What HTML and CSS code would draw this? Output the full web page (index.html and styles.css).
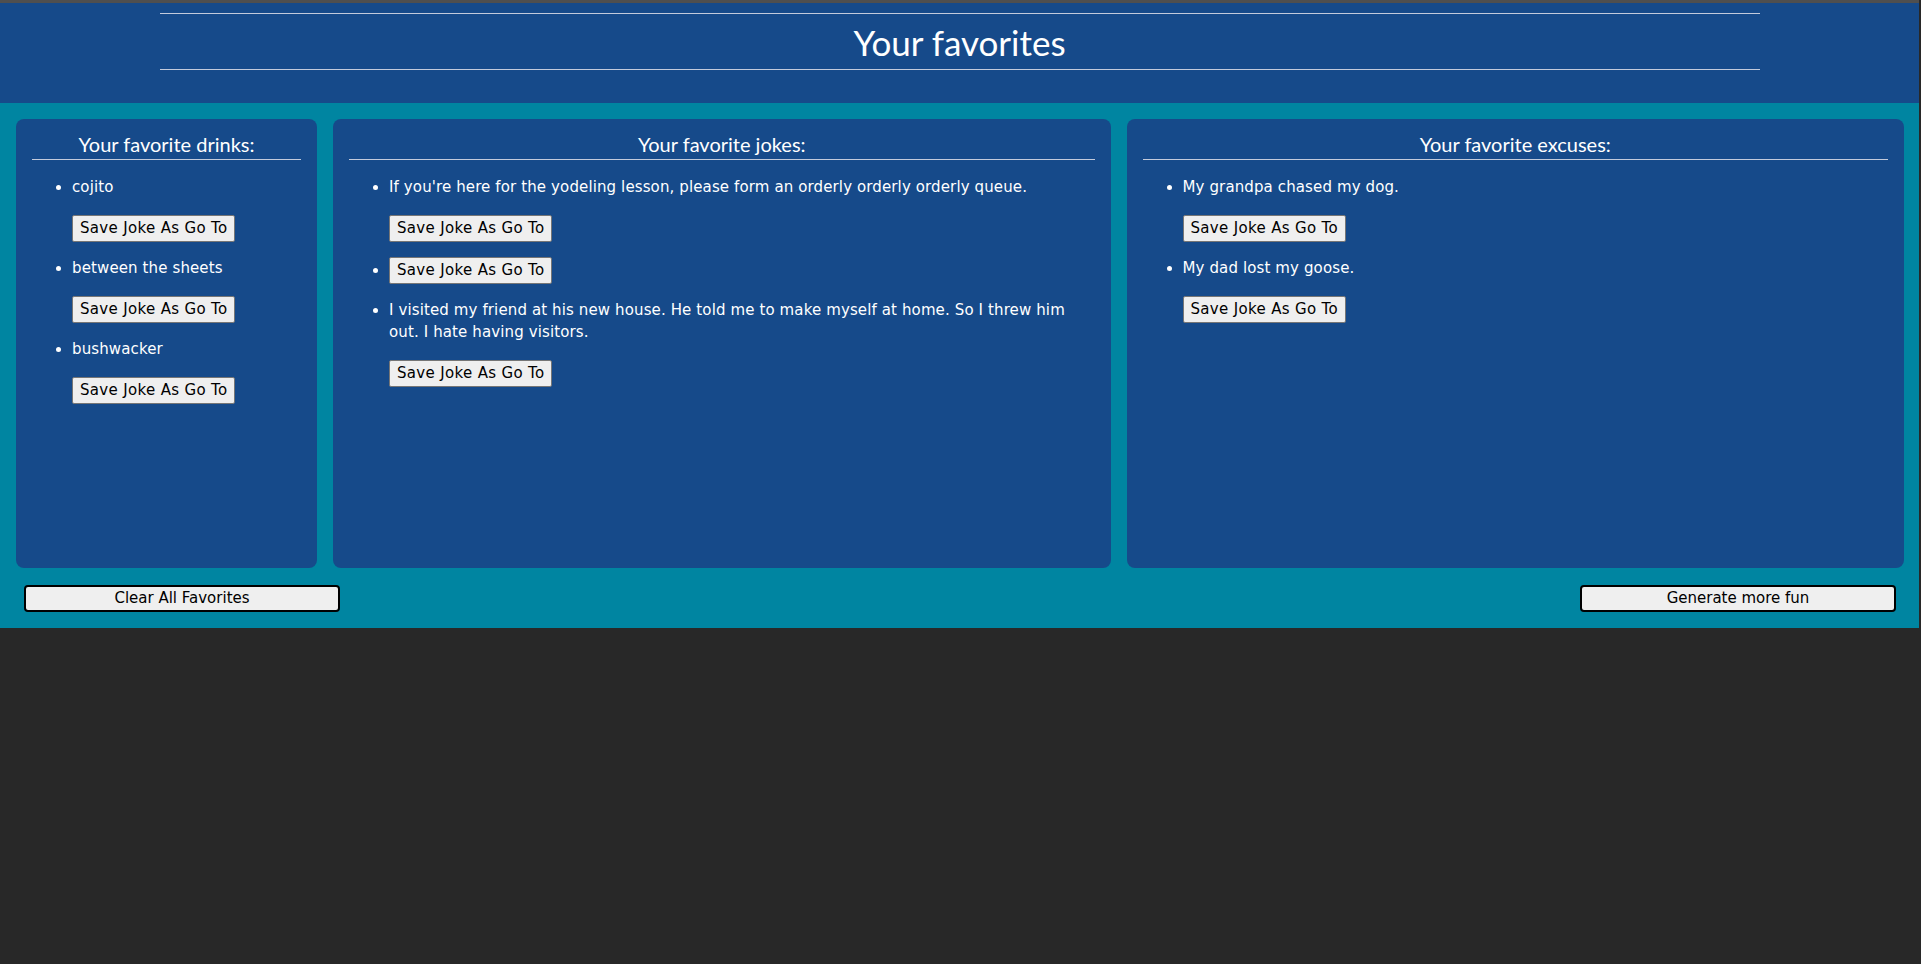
FILE: index.html
```html
<!DOCTYPE html>
<html lang="en">
<head>
<meta charset="utf-8">
<title>Your favorites</title>
<link rel="stylesheet" href="styles.css">
</head>
<body>
<div class="app">
  <header class="top">
    <h1 class="title">Your favorites</h1>
  </header>
  <main class="board">
    <div class="cards">
      <section class="card">
        <h2 class="card-title">Your favorite drinks:</h2>
        <ul class="fav-list">
          <li><div class="fav-text">cojito</div><button class="save-btn">Save Joke As Go To</button></li>
          <li><div class="fav-text">between the sheets</div><button class="save-btn">Save Joke As Go To</button></li>
          <li><div class="fav-text">bushwacker</div><button class="save-btn">Save Joke As Go To</button></li>
        </ul>
      </section>
      <section class="card">
        <h2 class="card-title">Your favorite jokes:</h2>
        <ul class="fav-list">
          <li><div class="fav-text">If you're here for the yodeling lesson, please form an orderly orderly orderly queue.</div><button class="save-btn">Save Joke As Go To</button></li>
          <li><button class="save-btn">Save Joke As Go To</button></li>
          <li><div class="fav-text">I visited my friend at his new house. He told me to make myself at home. So I threw him out. I hate having visitors.</div><button class="save-btn">Save Joke As Go To</button></li>
        </ul>
      </section>
      <section class="card">
        <h2 class="card-title">Your favorite excuses:</h2>
        <ul class="fav-list">
          <li><div class="fav-text">My grandpa chased my dog.</div><button class="save-btn">Save Joke As Go To</button></li>
          <li><div class="fav-text">My dad lost my goose.</div><button class="save-btn">Save Joke As Go To</button></li>
        </ul>
      </section>
    </div>
    <div class="actions">
      <button class="wide-btn">Clear All Favorites</button>
      <button class="wide-btn">Generate more fun</button>
    </div>
  </main>
</div>
</body>
</html>
```

FILE: styles.css
```css
html, body {
  margin: 0;
  padding: 0;
  background: #282828;
}

.app {
  margin-right: 2px;
  font-family: "DejaVu Sans", Verdana, sans-serif;
  font-size: 15px;
  color: #ffffff;
}

.top {
  background: #164a8a;
  border-top: 3px solid #4f4f4f;
  padding: 10px 0 33px;
}

.title {
  width: 1600px;
  margin: 0 auto;
  padding: 2px 0 0;
  border-top: 1px solid #c3cbdc;
  border-bottom: 1px solid #c3cbdc;
  font-family: Lato, "Open Sans", sans-serif;
  font-weight: 400;
  font-size: 35px;
  line-height: 53px;
  text-align: center;
  color: #ffffff;
}

.board {
  background: #0085a1;
  padding: 16px 15px 0 16px;
}

.cards {
  display: grid;
  grid-template-columns: 301px 1fr 1fr;
  gap: 16px;
}

.card {
  background: #164a8a;
  border-radius: 8px;
  height: 449px;
  box-sizing: border-box;
  padding: 13px 16px;
}

.card-title {
  margin: 0;
  padding-bottom: 3px;
  border-bottom: 1px solid #c3cbdc;
  font-family: Lato, "Open Sans", sans-serif;
  font-weight: 400;
  font-size: 20px;
  line-height: 24px;
  text-align: center;
}

.fav-list {
  margin: 16px 0;
  padding-left: 40px;
  line-height: 22px;
  letter-spacing: 0.12px;
}

.fav-list li {
  margin-bottom: 15px;
}

.fav-text {
  margin-bottom: 17px;
}

.save-btn {
  font-family: "DejaVu Sans", Verdana, sans-serif;
  font-size: 15px;
  line-height: 17px;
  letter-spacing: 0.33px;
  color: #000000;
  background: #efefef;
  border: 1px solid #767676;
  border-radius: 2px;
  padding: 4px 7px;
  margin: 0;
}

.actions {
  display: flex;
  justify-content: space-between;
  padding: 17px 8px 16px;
}

.wide-btn {
  width: 316px;
  font-family: "DejaVu Sans", Verdana, sans-serif;
  font-size: 15px;
  line-height: 17px;
  color: #000000;
  background: #efefef;
  border: 2px solid #000000;
  border-radius: 4px;
  padding: 3px 6px;
  margin: 0;
  text-align: center;
}
```
